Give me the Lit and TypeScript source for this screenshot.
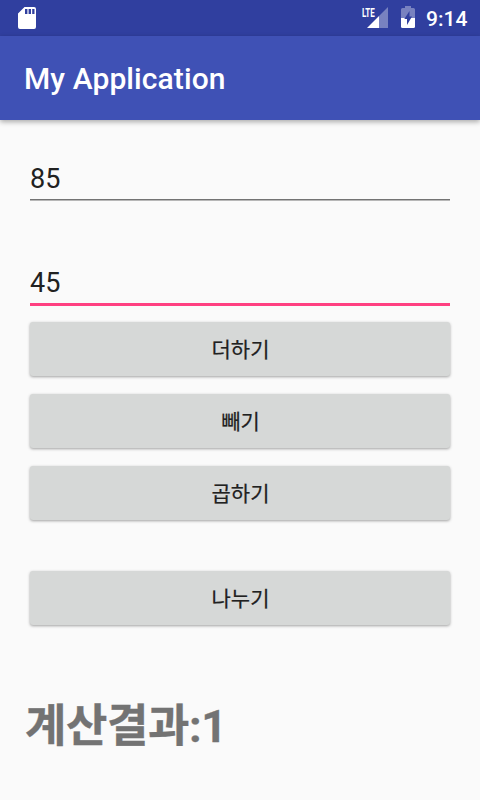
import { LitElement, html, css } from "lit";
import { customElement, property } from "lit/decorators.js";

@customElement("status-bar")
class StatusBar extends LitElement {
  static styles = css`
    :host { display: flex; align-items: center; height: 36px; background: #303f9f; color: #fff; }
    svg { display: block; }
    .card { margin-left: 18px; }
    .signal { margin-left: auto; }
    .battery { margin-left: 13px; }
    .lte { font: 700 12.5px Roboto, sans-serif; fill: #fff; }
    .time { width: 42px; margin: 2px 12px 0 11px; font: 500 21px/24px Roboto, sans-serif; white-space: nowrap; }
  `;
  render() {
    return html`
      <svg class="card" width="18" height="36" viewBox="0 0 18 36">
        <path fill="#fff" fill-rule="evenodd" d="M6.500 7H16a2 2 0 0 1 2 2v18a2 2 0 0 1-2 2H2a2 2 0 0 1-2-2V13.500zM7 9v5h2.400V9zM10.600 9v5H13V9zM14.200 9v5h2.300V9z" />
      </svg>
      <svg class="signal" width="27" height="36" viewBox="0 0 27 36">
        <path fill="#fff" fill-opacity=".35" d="M27 7v21h-9V16z" />
        <path fill="#fff" d="M18 16v12H6z" />
        <g transform="translate(.9 16.500) scale(.64 1)"><text class="lte" x="0" y="0">LTE</text></g>
      </svg>
      <svg class="battery" width="14" height="36" viewBox="0 0 14 36">
        <path fill="#fff" fill-opacity=".35" d="M0 18V9.500Q0 8 1.500 8H4V6h6v2h2.500Q14 8 14 9.500V18z" />
        <path fill="#fff" d="M0 18h14v8.500Q14 28 12.500 28h-11Q0 28 0 26.500z" />
        <path fill="#303f9f" d="M8.500 11L3.300 19H6v6l5-8.500H8.500z" />
      </svg>
      <div class="time">9:14</div>
    `;
  }
}

@customElement("number-field")
class NumberField extends LitElement {
  @property() value = "";
  @property({ type: Boolean, reflect: true }) focused = false;
  static styles = css`
    :host { display: block; height: 35px; margin: 0 30px; font: 400 27px/30px Roboto, sans-serif; color: #212121; }
    .text { height: 35px; }
    .line { height: 1px; background: #737373; border-bottom: 1px solid #b7b7b7; }
    :host([focused]) .line { height: 3px; background: #ff4081; border: 0; }
  `;
  render() {
    return html`<div class="text">${this.value}</div><div class="line"></div>`;
  }
}

@customElement("app-root")
class AppRoot extends LitElement {
  static styles = css`
    :host { display: flex; flex-direction: column; height: 800px; overflow: hidden; background: #fafafa; }
    .toolbar { display: flex; align-items: center; height: 84px; padding: 1px 24px 0; box-sizing: border-box; background: #3f51b5; color: #fff; font: 500 30px/36px Roboto, sans-serif; letter-spacing: .1px; box-shadow: 0 2px 5px rgba(0, 0, 0, .32); }
    .first { margin-top: 44px; }
    .second { margin-top: 69px; }
    .buttons { display: grid; row-gap: 18px; margin: 19px 30px 0; }
    button { height: 54px; padding: 2px 0 0 1px; border: 0; border-radius: 3px; background: #d6d8d7; color: #212121; font: 400 21px/52px Roboto, "Noto Sans CJK KR", sans-serif; -webkit-text-stroke: .2px #212121; box-shadow: 0 1px 3px rgba(0, 0, 0, .36); }
    .divide { margin-top: 33px; }
    .result { margin: 69px 24px 0 25px; color: #737373; font: 700 45px/66px Roboto, "Noto Sans CJK KR", sans-serif; letter-spacing: -.4px; -webkit-text-stroke: .3px #737373; white-space: nowrap; }
  `;
  render() {
    return html`
      <status-bar></status-bar>
      <div class="toolbar">My Application</div>
      <number-field class="first" value="85"></number-field>
      <number-field class="second" value="45" focused></number-field>
      <div class="buttons">
        <button>더하기</button>
        <button>빼기</button>
        <button>곱하기</button>
        <button class="divide">나누기</button>
      </div>
      <div class="result">계산결과:1</div>
    `;
  }
}
